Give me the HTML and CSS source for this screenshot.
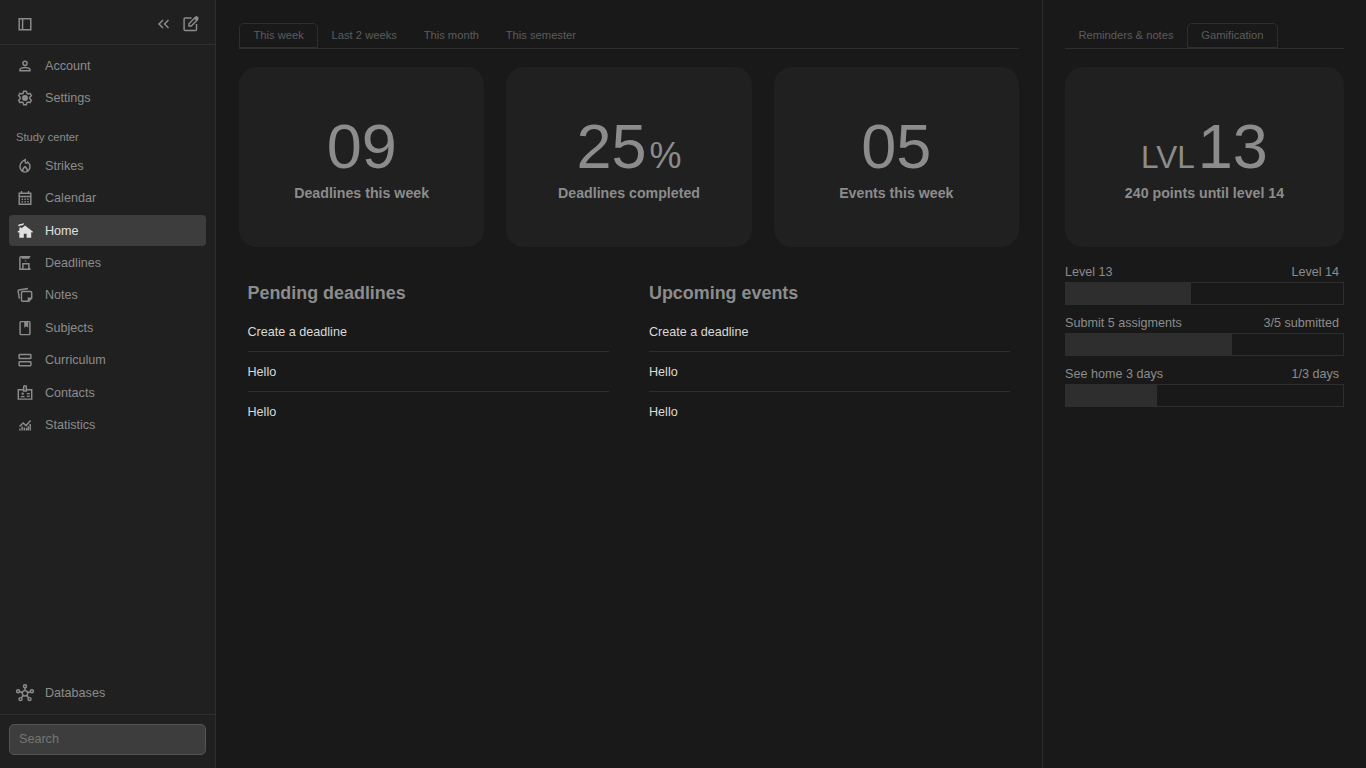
FILE: index.html
```
<!DOCTYPE html>
<html lang="en">
<head>
<meta charset="utf-8">
<title>Study center</title>
<link rel="stylesheet" href="styles.css">
</head>
<body>
<div class="app">
  <aside class="sidebar">
    <header class="side-head">
      <svg class="icon" viewBox="0 0 18 18"><path d="M3.200 3.700h11.600v11H3.200zM6.600 3.700v11"/></svg>
      <div class="head-actions">
        <svg class="icon" viewBox="0 0 18 18"><path d="M8 5 4 9l4 4M13.500 5l-4 4 4 4"/></svg>
        <svg class="icon" viewBox="0 0 18 18"><path d="M9.500 3H3.100a1 1 0 0 0-1 1v10.400a1 1 0 0 0 1 1h10.400a1 1 0 0 0 1-1V9"/><path d="M7 11V8.700l6.200-6.200 2.300 2.300L9.300 11z"/><path class="fill" d="m11.800 3.300 2-2q.7-.5 1.300 0l1.300 1.300q.5.700 0 1.300l-2 2z"/></svg>
      </div>
    </header>
    <nav class="nav nav-top">
      <a class="item"><svg class="icon" viewBox="0 0 18 18"><circle cx="9" cy="6.300" r="2.100"/><path d="M4 13.800v-1q0-1.300 1.500-1.700 3.500-1 7 0 1.500.4 1.500 1.700v1z"/></svg>Account</a>
      <a class="item"><svg class="icon" viewBox="0 0 18 18"><path d="M7.600 2.200h2.800l.4 2 1.300.8 1.900-.7 1.400 2.400-1.500 1.300v2l1.500 1.300-1.400 2.400-1.900-.7-1.300.8-.4 2H7.600l-.4-2-1.300-.8-1.900.7-1.400-2.400L4.100 10V8L2.600 6.700 4 4.300l1.900.7 1.300-.8z"/><circle class="fill" cx="9" cy="9" r="3"/></svg>Settings</a>
    </nav>
    <h2 class="side-label">Study center</h2>
    <nav class="nav">
      <a class="item"><svg class="icon" viewBox="0 0 18 18"><path d="M9.200 2.700v2.200c0 1.500 1.900 1.600 2.500.1 1.400 1 2.300 2.700 2.300 4.800a5 5.300 0 0 1-10 0c0-3 2-5.700 5.200-7.100z"/><path d="M6.700 14.400c-.7-2 .5-3.200 2.300-4.800 1.800 1.600 3 2.800 2.300 4.800"/></svg>Strikes</a>
      <a class="item"><svg class="icon" viewBox="0 0 18 18"><path d="M3.200 4.200h11.600v11H3.200zM3.200 7.400h11.600M5.500 2v2M12.500 2v2"/><path class="dots" d="M5.600 10.200h7M5.600 12.700h7"/></svg>Calendar</a>
      <a class="item active"><svg class="icon" viewBox="0 0 18 18"><path class="fill" d="M9 3.500 17 9.800l-.7 1-1.100-.7v5.700h-4.600v-4H7.800v4H3.300V10l-1.200.7-.7-.9 2-1.600V5.400h2v1z"/><path d="M2.700 4.200q.2-1.500 1.700-1.500h1Q7.200 2.700 7.300 1.400"/></svg>Home</a>
      <a class="item"><svg class="icon" viewBox="0 0 18 18"><path d="M14.300 2.800H5q-1.100 0-1.100 1.200v11.300h10.700M6.400 3v1h6.200V3M6.900 15.300V9.800h6v5.500"/><path class="thin" d="M8.900 6.800h1.200M12.900 14l1 1.300"/></svg>Deadlines</a>
      <a class="item"><svg class="icon" viewBox="0 0 18 18"><path d="M5.500 6.500q0-1 1-1h8.200q1 0 1 1v5.800l-2.900 2.900H6.500q-1 0-1-1z"/><path d="M3.400 12.600 2.100 5.100q-.1-.9.800-1.100L12 2.500"/><path class="fill" d="M11.700 11.500h4.500l-4.500 4.500z"/></svg>Notes</a>
      <a class="item"><svg class="icon" viewBox="0 0 18 18"><rect x="4.100" y="2.600" width="9.800" height="13" rx=".8"/><path class="fill" d="M8.200 2.600h4v6.200l-2-1.500-2 1.500z"/></svg>Subjects</a>
      <a class="item"><svg class="icon" viewBox="0 0 18 18"><rect x="3.100" y="3.500" width="11.800" height="4" rx=".6"/><rect x="3.100" y="10.700" width="11.800" height="4" rx=".6"/></svg>Curriculum</a>
      <a class="item"><svg class="icon" viewBox="0 0 18 18"><path d="M7.500 5.700H2.300v9.400h13.400V5.700h-5.200M7.700 7V2.300q1.300-1 2.600 0V7z"/><circle class="fill" cx="6.700" cy="9.600" r="1.200"/><path class="fill" d="M4.200 13.200q2.500-2.800 5 0z"/><path class="thin" d="M10.800 9.700h3M10.800 12.200h3"/></svg>Contacts</a>
      <a class="item"><svg class="icon" viewBox="0 0 18 18"><path d="m3.500 10.500 3.700-3.600 2.800 2.700 4.600-5.100"/><path d="M3.900 12.500v2M6.100 10.500v4M8.300 11.500v3M10.500 12v2.500M12.200 10.300v4.200M14.200 8v6.500"/></svg>Statistics</a>
    </nav>
    <nav class="nav nav-bottom">
      <a class="item"><svg class="icon" viewBox="0 0 18 18"><circle cx="9" cy="9.300" r="2.700"/><circle cx="9" cy="2.200" r="1.500"/><circle cx="2.100" cy="7.200" r="1.500"/><circle cx="15.900" cy="7.200" r="1.500"/><circle cx="4.500" cy="15.100" r="1.500"/><circle cx="13.500" cy="15.100" r="1.500"/><path d="M9 3.700v2.900M3.600 7.700l2.800.8M14.400 7.700l-2.800.8M5.400 13.800l1.900-2.300M12.600 13.800l-1.900-2.300"/></svg>Databases</a>
    </nav>
    <footer class="side-foot"><input class="search" type="text" placeholder="Search" aria-label="Search"></footer>
  </aside>
  <main class="main">
    <div class="tabs">
      <a class="tab selected">This week</a><a class="tab">Last 2 weeks</a><a class="tab">This month</a><a class="tab">This semester</a>
    </div>
    <div class="cards">
      <section class="card"><div class="number">09</div><div class="caption">Deadlines this week</div></section>
      <section class="card"><div class="number">25<span class="percent">%</span></div><div class="caption">Deadlines completed</div></section>
      <section class="card"><div class="number">05</div><div class="caption">Events this week</div></section>
    </div>
    <div class="lists">
      <section class="list"><h3>Pending deadlines</h3><ul><li>Create a deadline</li><li>Hello</li><li>Hello</li></ul></section>
      <section class="list"><h3>Upcoming events</h3><ul><li>Create a deadline</li><li>Hello</li><li>Hello</li></ul></section>
    </div>
  </main>
  <aside class="panel">
    <div class="tabs"><a class="tab">Reminders &amp; notes</a><a class="tab selected">Gamification</a></div>
    <section class="card"><div class="number"><span class="level">LVL</span>13</div><div class="caption">240 points until level 14</div></section>
    <div class="goals">
      <div class="goal"><div class="goal-text"><span>Level 13</span><span>Level 14</span></div><div class="bar"><div class="bar-fill" style="width:45.2%"></div></div></div>
      <div class="goal"><div class="goal-text"><span>Submit 5 assigments</span><span>3/5 submitted</span></div><div class="bar"><div class="bar-fill" style="width:60%"></div></div></div>
      <div class="goal"><div class="goal-text"><span>See home 3 days</span><span>1/3 days</span></div><div class="bar"><div class="bar-fill" style="width:33%"></div></div></div>
    </div>
  </aside>
</div>
</body>
</html>
```
FILE: styles.css
```
* { box-sizing: border-box; }
body { margin: 0; background: #191919; color: #8c8c8c; font-family: "Liberation Sans", Arial, sans-serif; font-size: 12.6px; }
.app { display: grid; grid-template-columns: 216px 827px 1fr; height: 768px; overflow: hidden; }
.sidebar { display: flex; flex-direction: column; background: #202020; border-right: 1px solid #2e2e2e; }
.side-head { display: flex; justify-content: space-between; align-items: center; height: 45px; padding: 3px 15.5px 0 16.4px; border-bottom: 1px solid #2e2e2e; }
.head-actions { display: flex; gap: 9px; }
.icon { flex: none; width: 18px; height: 18px; overflow: visible; fill: none; stroke: currentColor; stroke-width: 1.45; }
.fill { fill: currentColor; stroke: none; }
.thin { stroke-width: 1.2; }
.dots { stroke-width: 1.4; stroke-dasharray: 1.4 1.4; }
.nav { display: flex; flex-direction: column; gap: 1.4px; padding: 0 9px; }
.nav-top { padding-top: 5px; }
.item { display: flex; align-items: center; gap: 10.6px; height: 31px; padding: 0 7.4px; border-radius: 4px; }
.item.active { background: #3d3d3d; color: #e0e0e0; }
.side-label { margin: 0; height: 37px; padding: 18px 16px 0; font-size: 11.2px; font-weight: 400; line-height: 13px; }
.nav-bottom { margin-top: auto; padding-bottom: 6px; }
.side-foot { height: 54px; padding: 9px; border-top: 1px solid #2e2e2e; }
.search { display: block; width: 100%; height: 31px; padding: 0 9px 2px; border: 1px solid #555; border-radius: 5px; background: #3d3d3d; color: #8c8c8c; font: inherit; }
.search::placeholder { color: #757575; }
.main { padding: 23px 23px 0; border-right: 1px solid #2e2e2e; }
.panel { padding: 23px 22px 0; }
.tabs { display: flex; height: 26px; margin-bottom: 18px; border-bottom: 1px solid #2e2e2e; font-size: 11.2px; color: #5c5c5c; }
.tab { height: 25px; padding: 1px 13.4px 0; border-radius: 5px 5px 0 0; line-height: 23px; white-space: nowrap; }
.tab.selected { padding-top: 0; border: 1px solid #2e2e2e; }
.cards { display: grid; grid-template-columns: repeat(3, 1fr); gap: 22px; }
.card { height: 180px; padding-top: 43px; border-radius: 18px; background: #202020; text-align: center; }
.number { height: 73px; font-size: 63px; line-height: 73px; }
.percent { margin-left: 3px; font-size: 36px; }
.level { margin-right: 3px; font-size: 31.5px; }
.caption { margin-top: 2px; font-size: 14.2px; font-weight: 700; line-height: 16px; }
.lists { display: grid; grid-template-columns: 361px 361px; gap: 40.5px; padding: 36px 8.5px 0; }
.list h3 { margin: 0 0 8px; font-size: 17.92px; line-height: 21px; }
.list ul { margin: 0; padding: 0; list-style: none; color: #dadada; }
.list li { height: 40px; padding-top: 1px; line-height: 39px; border-bottom: 1px solid #2e2e2e; }
.list li:last-child { border-bottom: 0; }
.goals { display: flex; flex-direction: column; gap: 11px; padding-top: 18px; }
.goal-text { display: flex; justify-content: space-between; height: 17px; padding-right: 5px; line-height: 14px; }
.bar { height: 23px; border: 1px solid #2e2e2e; }
.bar-fill { height: 100%; background: #2e2e2e; }
```
